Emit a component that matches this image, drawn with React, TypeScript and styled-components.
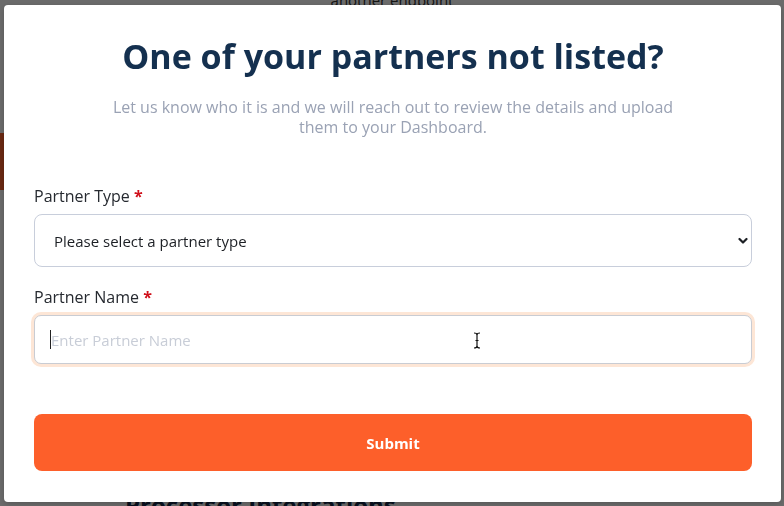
import React from 'react';
import styled, { createGlobalStyle } from 'styled-components';

const GlobalStyle = createGlobalStyle`
  html, body {
    margin: 0;
    padding: 0;
    background: #ffffff;
  }
  * {
    box-sizing: border-box;
  }
`;

// page behind the modal
const Page = styled.div`
  height: 506px;
  overflow: hidden;
  display: flex;
  flex-direction: column;
  font-family: 'Open Sans', 'Liberation Sans', sans-serif;
  color: #1b2b44;
`;

const TopNote = styled.div`
  margin-top: -12px;
  text-align: center;
  font-size: 15px;
  line-height: 24px;
  color: #333;
`;

const SideTab = styled.div`
  margin-top: 121px;
  width: 60px;
  height: 57px;
  flex-shrink: 0;
  background: #fd612c;
  border-radius: 0 4px 4px 0;
`;

const BehindHeading = styled.h2`
  margin: 300px 0 0 125px;
  font-size: 24px;
  line-height: 30px;
  font-weight: 700;
  white-space: nowrap;
  color: #15294a;
`;

const Overlay = styled.div`
  position: fixed;
  inset: 0;
  background: rgba(0, 0, 0, 0.58);
  padding: 5px 3px 4px 4px;
  display: flex;
`;

const Modal = styled.div`
  flex: 1;
  background: #ffffff;
  border-radius: 4px;
  padding: 31px 29px 31px 30px;
  display: flex;
  flex-direction: column;
  font-family: 'Open Sans', 'Liberation Sans', sans-serif;
  box-shadow: 0 2px 6px rgba(0, 0, 0, 0.2);
`;

const Title = styled.h1`
  margin: 0;
  text-align: center;
  font-size: 34px;
  line-height: 40px;
  font-weight: 700;
  color: #14304f;
`;

const Subtitle = styled.p`
  margin: 21px auto 0;
  max-width: 580px;
  text-align: center;
  font-size: 16px;
  line-height: 20px;
  color: #9aa2b4;
`;

const Label = styled.label<{ $first?: boolean }>`
  display: block;
  margin-top: ${p => (p.$first ? '48px' : '19px')};
  margin-bottom: 7px;
  font-size: 16px;
  line-height: 22px;
  color: #262a30;
`;

const Required = styled.span`
  color: #d0101b;
  font-weight: 700;
`;

const SelectWrap = styled.div`
  position: relative;
`;

const Select = styled.select`
  width: 100%;
  height: 53px;
  padding: 0 40px 0 19px;
  border: 1px solid #c8cedb;
  border-radius: 8px;
  background: #ffffff;
  font-family: inherit;
  font-size: 15px;
  color: #1c1f24;
  appearance: none;
  outline: none;
`;

const Chevron = styled.svg`
  position: absolute;
  right: 4px;
  top: 50%;
  transform: translateY(-50%);
  pointer-events: none;
`;

const InputWrap = styled.div`
  position: relative;
`;

const Input = styled.input`
  width: 100%;
  height: 49px;
  padding: 0 16px;
  border: 1px solid #c9ccd3;
  border-radius: 7px;
  box-shadow: 0 0 0 3px #fde6d6;
  font-family: inherit;
  font-size: 15px;
  color: #1c1f24;
  outline: none;

  &::placeholder {
    color: #c8cdd7;
  }
`;

const Caret = styled.span`
  position: absolute;
  left: 16px;
  top: 15px;
  width: 1px;
  height: 19px;
  background: #222;
`;

const Pointer = styled.svg`
  position: absolute;
  left: 439px;
  top: 17px;
  pointer-events: none;
`;

const SubmitButton = styled.button`
  margin-top: 50px;
  height: 57px;
  border: none;
  border-radius: 8px;
  background: #fd5f2a;
  color: #ffffff;
  font-family: inherit;
  font-size: 15px;
  font-weight: 700;
  cursor: pointer;
`;

const App = () => {
  return (
    <>
      <GlobalStyle />
      <Page>
        <TopNote>another endpoint</TopNote>
        <SideTab />
        <BehindHeading>Processor Integrations</BehindHeading>
      </Page>
      <Overlay>
        <Modal>
          <Title>One of your partners not listed?</Title>
          <Subtitle>
            Let us know who it is and we will reach out to review the details and upload them to your Dashboard.
          </Subtitle>
          <Label $first>
            Partner Type <Required>*</Required>
          </Label>
          <SelectWrap>
            <Select defaultValue="">
              <option value="">Please select a partner type</option>
              <option value="processor">Processor</option>
              <option value="bank">Bank</option>
            </Select>
            <Chevron width="10" height="7" viewBox="0 0 10 7">
              <path d="M1.5 1.5 L5 5 L8.5 1.5" fill="none" stroke="#1c1f24" strokeWidth="2.2" strokeLinecap="round" strokeLinejoin="round" />
            </Chevron>
          </SelectWrap>
          <Label>
            Partner Name <Required>*</Required>
          </Label>
          <InputWrap>
            <Input placeholder="Enter Partner Name" />
            <Caret />
            <Pointer width="8" height="17" viewBox="0 0 8 17">
              <path d="M1 1 Q4 1 4 3 L4 14 Q4 16 1 16 M7 1 Q4 1 4 3 M4 14 Q4 16 7 16 M2.5 8.5 L5.5 8.5" fill="none" stroke="#111" strokeWidth="1.2" />
            </Pointer>
          </InputWrap>
          <SubmitButton type="submit">Submit</SubmitButton>
        </Modal>
      </Overlay>
    </>
  );
};

export default App;
